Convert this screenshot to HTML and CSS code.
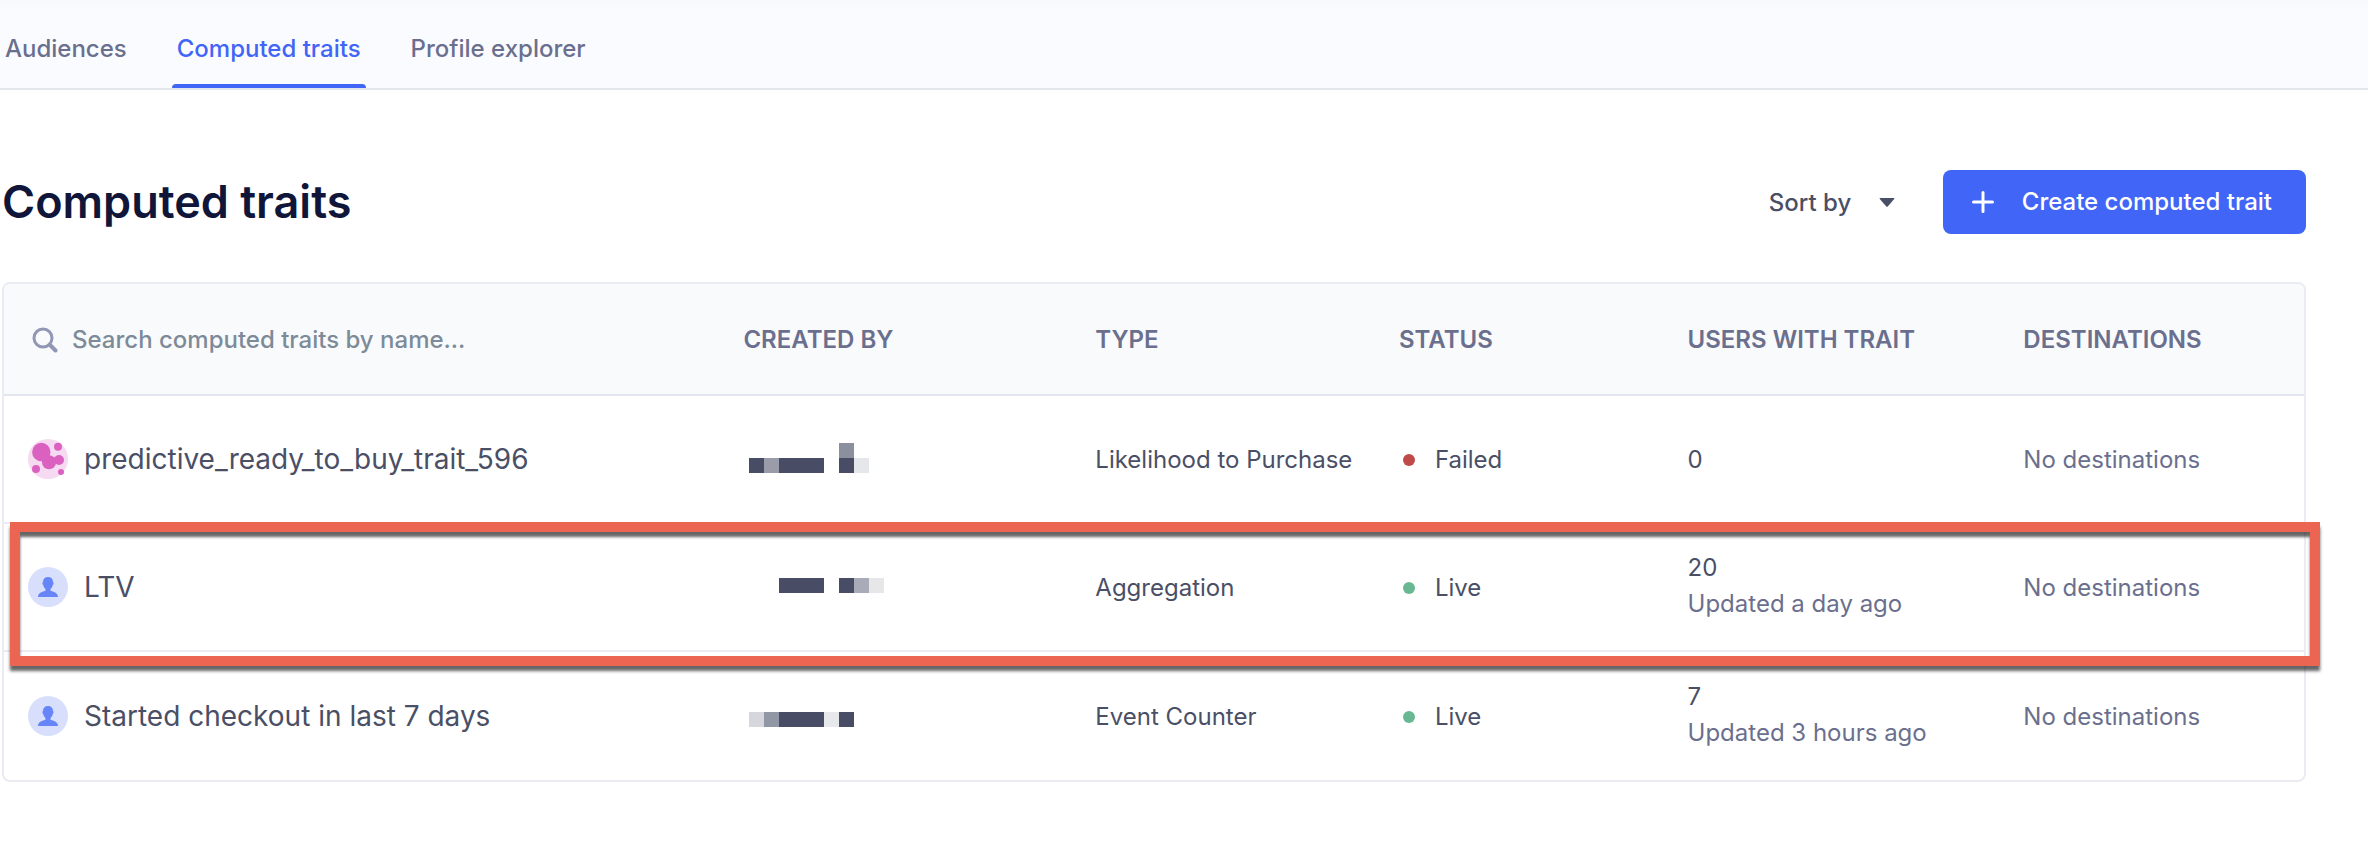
FILE: index.html
```html
<!DOCTYPE html>
<html lang="en">
<head>
<meta charset="utf-8">
<title>Computed traits</title>
<link rel="stylesheet" href="styles.css">
</head>
<body>
<nav class="tabs">
  <a class="tab" href="#">Audiences</a>
  <a class="tab tab-active" href="#" aria-current="page">Computed traits</a>
  <a class="tab" href="#">Profile explorer</a>
</nav>
<main class="page">
  <header class="page-head">
    <h1 class="title">Computed traits</h1>
    <div class="actions">
      <div class="sort">
        <select class="sort-select" aria-label="Sort by"><option>Sort by</option></select>
        <svg class="caret" width="16" height="10" viewBox="0 0 16 10" aria-hidden="true"><path d="M1.200 0h13.600q1.200 0 .4 1L8.700 8.600q-.7.8-1.400 0L.8 1Q0 0 1.200 0z" fill="#4a4f66"/></svg>
      </div>
      <button class="create" type="button">
        <svg width="22" height="22" viewBox="0 0 22 22" aria-hidden="true"><path d="M11 1.500v19M1.500 11h19" stroke="#fff" stroke-width="3" stroke-linecap="round"/></svg>
        <span>Create computed trait</span>
      </button>
    </div>
  </header>

  <svg class="defs" aria-hidden="true">
    <symbol id="person" viewBox="0 0 40 40">
      <circle cx="20" cy="20" r="20" fill="#d7dffc"/>
      <path d="M20 10c3.300 0 5 2 5 5 .8.300.8 2.300-.2 3-.4 1.700-1.200 3-2.300 4v1.500c1.200 1.300 7.500 1.400 7.500 6.500H10c0-5.100 6.300-5.200 7.500-6.500V22c-1.100-1-1.900-2.300-2.300-4-1-.7-1-2.700-.2-3 0-3 1.700-5 5-5z" fill="#6685f8"/>
    </symbol>
  </svg>

  <div class="card">
    <table class="traits">
      <colgroup><col class="c-name"><col class="c-by"><col class="c-type"><col class="c-status"><col class="c-users"><col class="c-dest"></colgroup>
      <thead>
        <tr>
          <th scope="col">
            <div class="search">
              <svg width="26" height="26" viewBox="0 0 26 26" aria-hidden="true"><circle cx="11" cy="11" r="9" fill="none" stroke="#9297b5" stroke-width="3"/><path d="M18 18l5.500 5.500" stroke="#9297b5" stroke-width="4" stroke-linecap="round"/></svg>
              <input class="search-input" type="search" placeholder="Search computed traits by name..." aria-label="Search computed traits by name">
            </div>
          </th>
          <th scope="col">CREATED BY</th>
          <th scope="col">TYPE</th>
          <th scope="col">STATUS</th>
          <th scope="col">USERS WITH TRAIT</th>
          <th scope="col">DESTINATIONS</th>
        </tr>
      </thead>
      <tbody>
        <tr>
          <td class="graphic"><div class="name">
            <svg width="40" height="40" viewBox="0 0 40 40" aria-hidden="true"><circle cx="20" cy="20" r="20" fill="#f5daf1"/><g fill="#db61c0"><circle cx="13.300" cy="13" r="9.200"/><circle cx="21" cy="23.300" r="7"/><circle cx="31" cy="21" r="5"/><path d="M22 17l4 1.500h5v6l-6 1z"/><circle cx="30" cy="7.700" r="4"/><circle cx="8" cy="30" r="4"/><circle cx="33" cy="33" r="3"/></g></svg>
            <span>predictive_ready_to_buy_trait_596</span></div></td>
          <td class="graphic"><svg class="mosaic" width="156" height="30" viewBox="0 0 156 30" shape-rendering="crispEdges" aria-hidden="true"><g fill="#484d65"><path d="M6 15h15v15H6zM36 15h45v15H36zM96 15h15v15H96z"/></g><path d="M21 15h15v15H21z" fill="#9a9da9"/><path d="M96 0h15v15H96z" fill="#8c8f9e"/><path d="M111 15h15v15h-15z" fill="#e6e7eb"/></svg></td>
          <td>Likelihood to Purchase</td>
          <td><div class="status"><i class="dot dot-failed"></i>Failed</div></td>
          <td>0</td>
          <td class="muted">No destinations</td>
        </tr>
        <tr class="selected">
          <td class="graphic"><div class="name"><svg width="40" height="40" aria-hidden="true"><use href="#person"/></svg><span>LTV</span></div></td>
          <td class="graphic"><svg class="mosaic" width="156" height="30" viewBox="0 0 156 30" shape-rendering="crispEdges" aria-hidden="true"><path d="M36 7h45v15H36zM96 7h15v15H96z" fill="#484d65"/><path d="M111 7h15v15h-15z" fill="#a9abb8"/><path d="M126 7h15v15h-15z" fill="#e7e7ea"/></svg></td>
          <td>Aggregation</td>
          <td><div class="status"><i class="dot dot-live"></i>Live</div></td>
          <td class="two-line">20<div class="muted">Updated a day ago</div></td>
          <td class="muted">No destinations<div class="highlight"></div></td>
        </tr>
        <tr>
          <td class="graphic"><div class="name"><svg width="40" height="40" aria-hidden="true"><use href="#person"/></svg><span>Started checkout in last 7 days</span></div></td>
          <td class="graphic"><svg class="mosaic" width="156" height="30" viewBox="0 0 156 30" shape-rendering="crispEdges" aria-hidden="true"><path d="M36 12h45v15H36zM96 12h15v15H96z" fill="#484d65"/><path d="M6 12h15v15H6z" fill="#d6d7dc"/><path d="M21 12h15v15H21z" fill="#9297a6"/><path d="M81 12h15v15H81z" fill="#e6e8ec"/></svg></td>
          <td>Event Counter</td>
          <td><div class="status"><i class="dot dot-live"></i>Live</div></td>
          <td class="two-line">7<div class="muted">Updated 3 hours ago</div></td>
          <td class="muted">No destinations</td>
        </tr>
      </tbody>
    </table>
  </div>
</main>
</body>
</html>
```

FILE: styles.css
```css
* { box-sizing: border-box; }

body {
  margin: 0;
  background: #fff;
  color: #4a4f66;
  font: 400 24px/36px Inter, "Liberation Sans", sans-serif;
}

.tabs {
  display: flex;
  gap: 40px;
  height: 90px;
  border-bottom: 2px solid #e4e6ed;
  background: linear-gradient(#f8f9fb, #fafbff 12px);
}
.tab {
  padding: 31px 5px 0;
  color: #6b6f8e;
  font-weight: 500;
  text-decoration: none;
}
.tab-active {
  position: relative;
  color: #4165f6;
}
.tab-active::after {
  content: "";
  position: absolute;
  inset: auto 0 0;
  height: 4px;
  border-radius: 4px 4px 0 0;
  background: #4165f6;
}

.page { padding: 80px 62px 0 2px; }
.page-head {
  display: flex;
  align-items: center;
  justify-content: space-between;
  margin-bottom: 48px;
}
.title {
  margin: 0;
  color: #10163a;
  font-size: 45px;
  font-weight: 600;
  line-height: 64px;
}
.actions {
  display: flex;
  align-items: center;
  gap: 48px;
}
.sort { position: relative; }
.sort-select {
  appearance: none;
  padding: 2px 43px 0 0;
  border: 0;
  background: none;
  color: #4a4f66;
  font: inherit;
  font-weight: 500;
}
.caret {
  position: absolute;
  top: 15px;
  right: 0;
  pointer-events: none;
}
.create {
  display: flex;
  align-items: center;
  gap: 28px;
  height: 64px;
  padding: 0 34px 0 29px;
  border: 0;
  border-radius: 8px;
  background: #4165f6;
  color: #fff;
  font: inherit;
  font-weight: 500;
}

.defs { display: none; }

.card {
  border: 2px solid #ebecf3;
  border-radius: 8px;
}
.traits {
  width: 100%;
  border-collapse: separate;
  border-spacing: 0;
  table-layout: fixed;
}
.c-name { width: 32.15%; }
.c-by { width: 15.3%; }
.c-type { width: 13.2%; }
.c-status { width: 12.55%; }
.c-users { width: 14.6%; }
.c-dest { width: 12.2%; }

th {
  height: 112px;
  padding: 2px 0 0;
  border-bottom: 2px solid #e4e6ef;
  background: #f9fafc;
  color: #6b6f8e;
  font-weight: 600;
  text-align: left;
}
th:first-child { border-top-left-radius: 6px; }
th:last-child { border-top-right-radius: 6px; }
td {
  height: 128px;
  padding: 2px 0 0;
  border-bottom: 2px solid #ebecf3;
  white-space: nowrap;
}
tr:last-child td { border-bottom: 0; }
.graphic { padding: 0; }

.search {
  display: flex;
  align-items: center;
  gap: 14px;
  padding-left: 28px;
}
.search-input {
  flex: 1;
  min-width: 0;
  padding: 0;
  border: 0;
  outline: 0;
  background: none;
  font: inherit;
  font-weight: 500;
}
.search-input::placeholder { color: #7d8b99; }

.name {
  display: flex;
  align-items: center;
  gap: 16px;
  padding-left: 24px;
  font-size: 28px;
}
.mosaic {
  display: block;
  margin-bottom: 2px;
}
.status {
  display: flex;
  align-items: center;
  gap: 20px;
  padding-left: 4px;
}
.dot {
  width: 12px;
  height: 12px;
  border-radius: 50%;
}
.dot-failed { background: #bf4b48; }
.dot-live { background: #68b892; }
.muted { color: #6b6f8e; }
.two-line { padding: 0 0 2px; }

.selected { position: relative; }
.highlight {
  position: absolute;
  inset: -2px -16px -14px 6px;
  border: 10px solid #ec6452;
  box-shadow: 0 5px 3px rgba(0, 0, 0, .6), inset 0 5px 3px rgba(0, 0, 0, .6);
  pointer-events: none;
}
```
